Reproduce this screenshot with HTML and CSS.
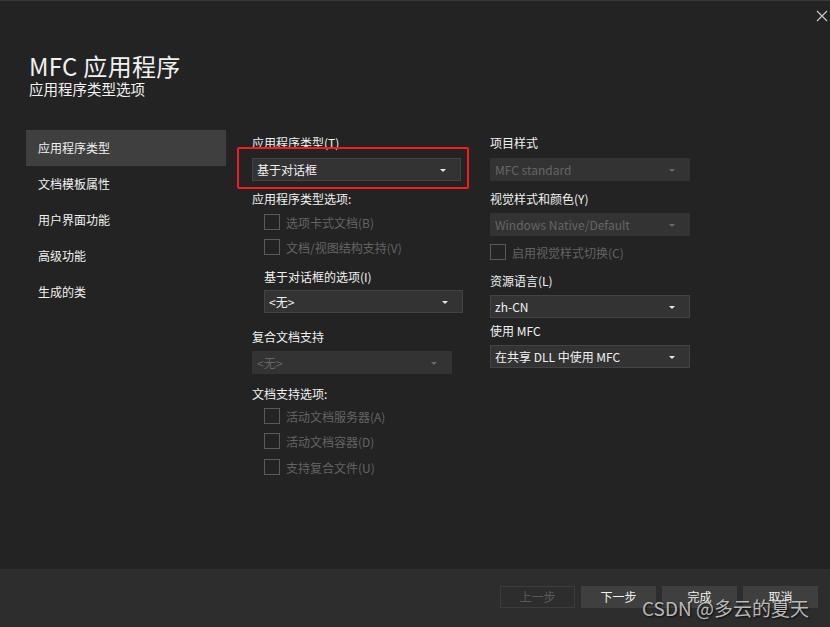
FILE: index.html
```html
<!DOCTYPE html>
<html>

<head>
    <meta charset="utf-8" />
    <title>MFC 应用程序</title>
    <link rel="stylesheet" href="styles.css">
</head>

<body>
    <div class="dialog">
        <div class="close-btn">
            <svg width="12" height="12" viewBox="0 0 12 12">
                <path d="M1 1 L11 11 M11 1 L1 11" stroke="#c8c8c8" stroke-width="1.2" fill="none" />
            </svg>
        </div>
        <div class="main">
            <header>
                <h1>MFC 应用程序</h1>
                <div class="subtitle">应用程序类型选项</div>
            </header>
            <div class="content">
                <ul class="sidebar">
                    <li class="active">应用程序类型</li>
                    <li>文档模板属性</li>
                    <li>用户界面功能</li>
                    <li>高级功能</li>
                    <li>生成的类</li>
                </ul>
                <div class="col col-left">
                    <div class="label m5">应用程序类型(T)</div>
                    <div class="select m7">基于对话框<span class="arrow"></span></div>
                    <div class="label m10">应用程序类型选项:</div>
                    <div class="check indent m7"><span class="box"></span>选项卡式文档(B)</div>
                    <div class="check indent m9"><span class="box"></span>文档/视图结构支持(V)</div>
                    <div class="label indent m14">基于对话框的选项(I)</div>
                    <div class="select indent sel-199 m5">&lt;无&gt;<span class="arrow"></span></div>
                    <div class="label m16">复合文档支持</div>
                    <div class="select disabled sel-200 m6">&lt;无&gt;<span class="arrow"></span></div>
                    <div class="label m12">文档支持选项:</div>
                    <div class="check indent m6"><span class="box"></span>活动文档服务器(A)</div>
                    <div class="check indent m9"><span class="box"></span>活动文档容器(D)</div>
                    <div class="check indent m10"><span class="box"></span>支持复合文件(U)</div>
                </div>
                <div class="col col-right">
                    <div class="label m5">项目样式</div>
                    <div class="select disabled m7">MFC standard<span class="arrow"></span></div>
                    <div class="label m10">视觉样式和颜色(Y)</div>
                    <div class="select disabled m6">Windows Native/Default<span class="arrow"></span></div>
                    <div class="check m8"><span class="box"></span>启用视觉样式切换(C)</div>
                    <div class="label m13">资源语言(L)</div>
                    <div class="select m6">zh-CN<span class="arrow"></span></div>
                    <div class="label m5">使用 MFC</div>
                    <div class="select m6">在共享 DLL 中使用 MFC<span class="arrow"></span></div>
                </div>
            </div>
        </div>
        <footer>
            <div class="btn disabled">上一步</div>
            <div class="btn">下一步</div>
            <div class="btn">完成</div>
            <div class="btn">取消</div>
        </footer>
        <div class="highlight"></div>
        <div class="watermark">CSDN @多云的夏天</div>
    </div>
</body>

</html>
```

FILE: styles.css
```css
* {
    box-sizing: border-box;
}

body {
    margin: 0;
    background-color: #232323;
    font-family: "Noto Sans CJK SC", sans-serif;
    color: #f1f1f1;
}

.dialog {
    position: relative;
    width: 830px;
    height: 627px;
    display: flex;
    flex-direction: column;
    border-top: 1px solid #383838;
    overflow: hidden;
}

.main {
    flex: 1;
}

header {
    padding: 51px 0 0 29px;
}

h1 {
    margin: 0;
    font-size: 24px;
    line-height: 28px;
    font-weight: normal;
    letter-spacing: 0.3px;
}

.subtitle {
    font-size: 14.5px;
    line-height: 18px;
}

.content {
    display: flex;
    margin-top: 32px;
}

.sidebar {
    list-style: none;
    margin: 0 0 0 26px;
    padding: 0;
    width: 200px;
}

.sidebar li {
    height: 36px;
    line-height: 36px;
    padding-left: 12px;
    font-size: 12px;
}

.sidebar li.active {
    background-color: #3f3f3f;
}

.col {
    display: flex;
    flex-direction: column;
    align-items: flex-start;
}

.col-left {
    margin-left: 26px;
    width: 215px;
}

.col-right {
    margin-left: 23px;
    width: 200px;
}

.label {
    font-size: 12px;
    line-height: 16px;
    color: #f1f1f1;
}

.indent {
    margin-left: 12px;
}

.select {
    position: relative;
    width: 209px;
    height: 23px;
    line-height: 21px;
    padding-left: 4px;
    font-size: 12px;
    background-color: #333333;
    border: 1px solid #434343;
    color: #f1f1f1;
}

.select.sel-199 {
    width: 199px;
}

.select.sel-200,
.col-right .select {
    width: 200px;
}

.select.disabled {
    background-color: #333333;
    border-color: #333333;
    color: #656565;
}

.arrow {
    position: absolute;
    right: 14px;
    top: 10px;
    width: 0;
    height: 0;
    border-left: 3px solid transparent;
    border-right: 3px solid transparent;
    border-top: 3px solid #e8e8e8;
}

.disabled .arrow {
    border-top-color: #6a6a6a;
}

.check {
    display: flex;
    align-items: center;
    height: 16px;
    font-size: 12px;
    color: #636363;
}

.check .box {
    width: 16px;
    height: 16px;
    border: 1px solid #5a5a5a;
    margin-right: 6px;
}

.m5 { margin-top: 5px; }
.m6 { margin-top: 6px; }
.m7 { margin-top: 7px; }
.m8 { margin-top: 8px; }
.m9 { margin-top: 9px; }
.m10 { margin-top: 10px; }
.m12 { margin-top: 12px; }
.m13 { margin-top: 13px; }
.m14 { margin-top: 14px; }
.m16 { margin-top: 16px; }

footer {
    height: 58px;
    background-color: #2d2d2d;
    display: flex;
    justify-content: flex-end;
    align-items: flex-start;
    gap: 6px;
    padding: 17px 12px 0 0;
}

.btn {
    width: 75px;
    height: 22px;
    line-height: 22px;
    text-align: center;
    font-size: 12px;
    background-color: #3f3f3f;
    color: #f1f1f1;
}

.btn.disabled {
    background-color: transparent;
    border: 1px solid #3c3c3c;
    line-height: 20px;
    color: #5a5a5a;
}

.close-btn {
    position: absolute;
    top: 9px;
    right: 2px;
}

.close-btn svg {
    display: block;
}

.highlight {
    position: absolute;
    left: 237px;
    top: 146px;
    width: 232px;
    height: 42px;
    border: 2px solid #f01e1e;
    border-radius: 2px;
}

.watermark {
    position: absolute;
    left: 642px;
    top: 594px;
    font-size: 19px;
    line-height: 26px;
    color: rgba(235, 235, 235, 0.75);
    text-shadow: 1px 1px 2px rgba(0, 0, 0, 0.8);
}
```
